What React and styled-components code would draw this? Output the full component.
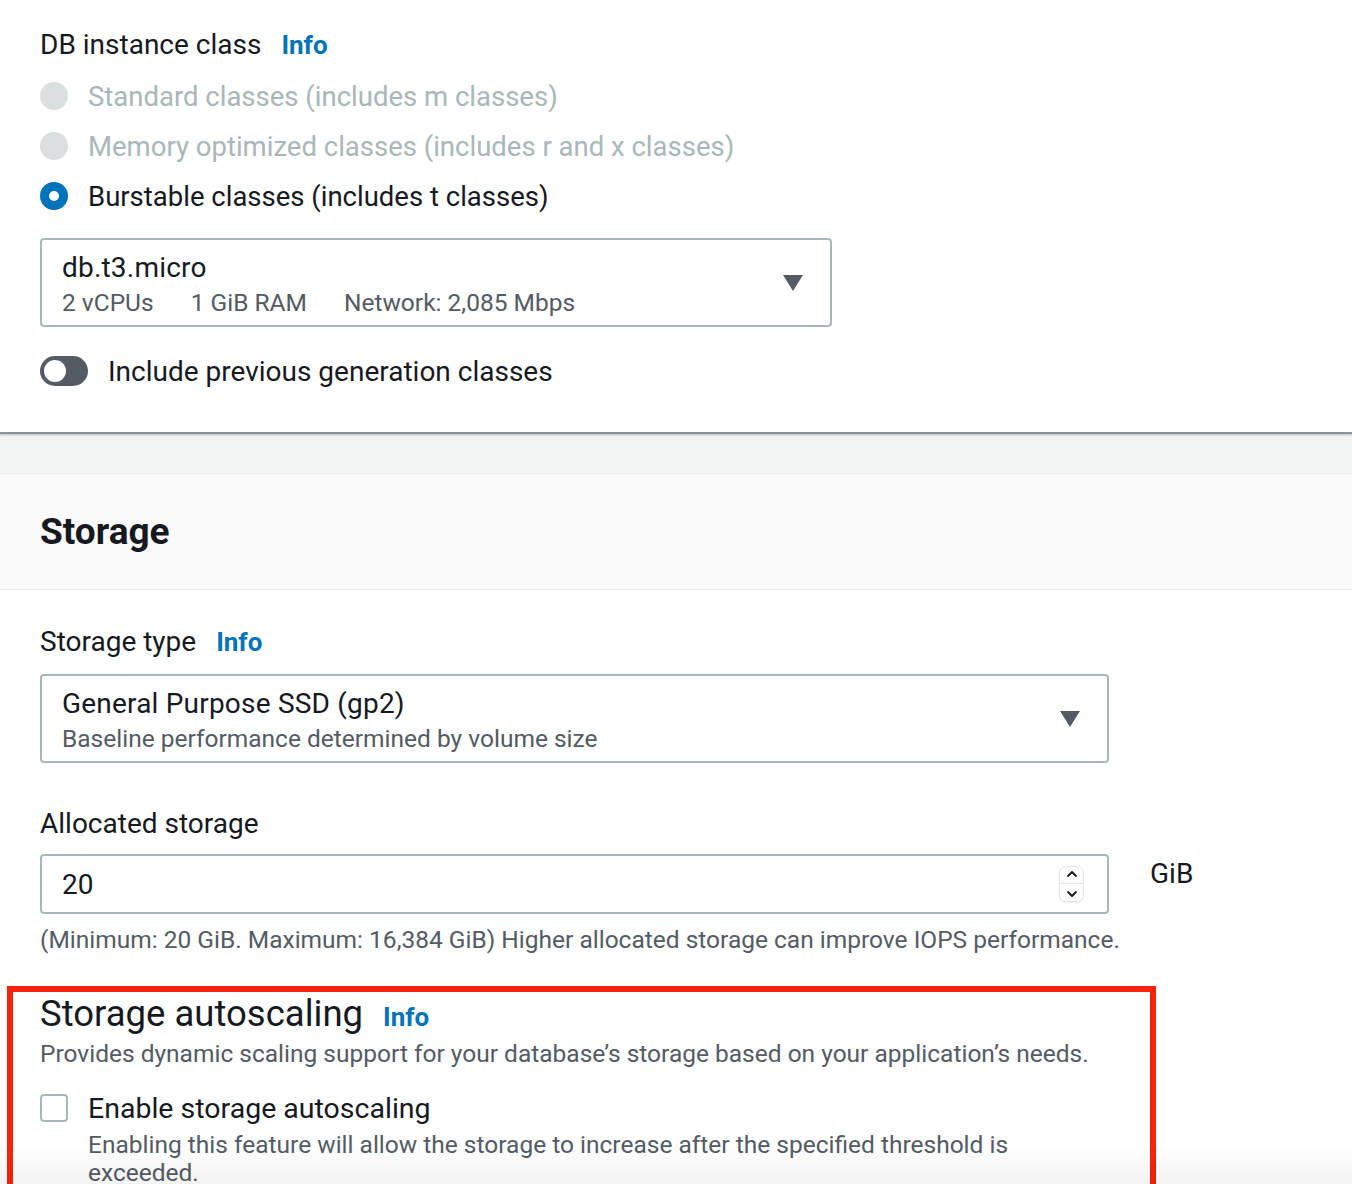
import styled, { createGlobalStyle } from "styled-components";

const GlobalStyle = createGlobalStyle`
  html, body {
    margin: 0;
    padding: 0;
    background: #ffffff;
    font-family: Roboto, "Noto Sans", "Liberation Sans", sans-serif;
    color: #16191f;
  }
  body {
    overflow: hidden;
  }
`;

const Page = styled.div`
  position: relative;
  width: 1352px;
  height: 1184px;
  overflow: hidden;
`;

const TopSection = styled.div`
  padding: 27px 40px 46px 40px;
  border-bottom: 2px solid #879596;
  box-shadow: 0 1px 2px rgba(0, 28, 36, 0.25);
  position: relative;
  z-index: 1;
`;

const Band = styled.div`
  height: 39px;
  background: #f2f3f3;
  border-bottom: 1px solid #eaeded;
`;

const Header = styled.div`
  height: 116px;
  background: #fafafa;
  border-bottom: 1px solid #eaeded;
  display: flex;
  align-items: center;
  padding: 0 40px;
  box-sizing: border-box;
`;

const HeaderTitle = styled.h2`
  margin: 0;
  font-size: 37px;
  font-weight: 700;
`;

const Content = styled.div`
  padding: 34px 40px 0 40px;
`;

const LabelRow = styled.div`
  display: flex;
  align-items: baseline;
  gap: 20px;
  margin-top: ${(p) => p.$mt || 0}px;
  font-size: 28px;
  line-height: 36px;
`;

const Info = styled.span`
  color: #0073bb;
  font-weight: 700;
  font-size: 26px;
`;

const RadioGroup = styled.div`
  margin-top: 8px;
  display: flex;
  flex-direction: column;
`;

const RadioRow = styled.div`
  display: flex;
  align-items: center;
  gap: 20px;
  height: 50px;
  font-size: 27.5px;
  color: ${(p) => (p.$disabled ? "#aab7b8" : "#16191f")};
`;

const Radio = styled.span`
  width: 28px;
  height: 28px;
  border-radius: 50%;
  box-sizing: border-box;
  background: ${(p) => (p.$checked ? "#ffffff" : "#dbdfe0")};
  border: ${(p) => (p.$checked ? "9px solid #0073bb" : "none")};
  flex-shrink: 0;
`;

const Select = styled.div`
  margin-top: ${(p) => p.$mt || 0}px;
  width: ${(p) => p.$width}px;
  height: 89px;
  box-sizing: border-box;
  border: 2px solid #aab7b8;
  border-radius: 4px;
  padding: 11px 27px 0 20px;
  display: flex;
  align-items: center;
  justify-content: space-between;
`;

const SelectText = styled.div`
  display: flex;
  flex-direction: column;
  align-self: flex-start;
`;

const SelectMain = styled.div`
  font-size: 28px;
  line-height: 34px;
  letter-spacing: 0.2px;
`;

const SelectSub = styled.div`
  margin-top: 3px;
  display: flex;
  gap: 37px;
  font-size: 24.5px;
  line-height: 30px;
  color: #545b64;
`;

const Caret = styled.svg`
  width: 20px;
  height: 16px;
  flex-shrink: 0;
  margin-top: -10px;
`;

const ToggleRow = styled.div`
  margin-top: 29px;
  display: flex;
  align-items: center;
  gap: 20px;
  font-size: 28px;
  height: 30px;
`;

const Toggle = styled.span`
  width: 48px;
  height: 30px;
  border-radius: 15px;
  background: #545b64;
  display: flex;
  align-items: center;
  padding: 0 4px;
  box-sizing: border-box;
  &::before {
    content: "";
    width: 22px;
    height: 22px;
    border-radius: 50%;
    background: #ffffff;
  }
`;

const InputLine = styled.div`
  margin-top: 12px;
  display: flex;
  align-items: flex-start;
  gap: 41px;
`;

const Input = styled.div`
  width: 1069px;
  height: 60px;
  box-sizing: border-box;
  border: 2px solid #aab7b8;
  border-radius: 4px;
  display: flex;
  align-items: center;
  justify-content: space-between;
  padding: 0 23px 0 20px;
  font-size: 28px;
`;

const Spinner = styled.div`
  width: 25px;
  height: 36px;
  box-sizing: border-box;
  border: 1px solid #e3e6e6;
  border-radius: 7px;
  display: flex;
  flex-direction: column;
  align-items: center;
  justify-content: space-around;
  background: #ffffff;
  box-shadow: 0 1px 1px rgba(0, 0, 0, 0.06);
`;

const SpinDivider = styled.span`
  width: 100%;
  height: 1px;
  background: #e3e6e6;
`;

const Unit = styled.div`
  font-size: 28px;
  line-height: 36px;
  margin-top: 2px;
`;

const Help = styled.div`
  margin-top: 11px;
  font-size: 24.5px;
  line-height: 30px;
  color: #545b64;
`;

const Autoscale = styled.div`
  position: relative;
  margin-top: 37px;
`;

const AutoTitleRow = styled.div`
  display: flex;
  align-items: baseline;
  gap: 20px;
`;

const AutoTitle = styled.h3`
  margin: 0;
  font-size: 36.5px;
  font-weight: 400;
  line-height: 44px;
`;

const Desc = styled.div`
  margin-top: 3px;
  font-size: 24.5px;
  line-height: 30px;
  color: #545b64;
`;

const CheckRow = styled.div`
  margin-top: 21px;
  display: flex;
  align-items: center;
  gap: 20px;
  height: 36px;
  font-size: 28.5px;
`;

const Checkbox = styled.span`
  width: 28px;
  height: 28px;
  box-sizing: border-box;
  border: 2px solid #aab7b8;
  border-radius: 4px;
  flex-shrink: 0;
`;

const CheckSub = styled.div`
  margin-top: 5px;
  margin-left: 48px;
  width: 1000px;
  font-size: 24.5px;
  line-height: 28px;
  color: #545b64;
`;

const Annotation = styled.div`
  position: absolute;
  left: -33px;
  top: -6px;
  width: 1149px;
  height: 232px;
  box-sizing: border-box;
  border: 6px solid #f7230c;
  pointer-events: none;
`;

const FooterShade = styled.div`
  position: absolute;
  left: 0;
  right: 0;
  bottom: 0;
  height: 40px;
  background: linear-gradient(rgba(0, 0, 0, 0), rgba(0, 0, 0, 0.05));
  pointer-events: none;
`;

function CaretIcon() {
  return (
    <Caret viewBox="0 0 20 16">
      <path d="M0 0 H20 L10 16 Z" fill="#545b64" />
    </Caret>
  );
}

function Chevron({ up }) {
  return (
    <svg width="12" height="8" viewBox="0 0 12 8">
      <path
        d={up ? "M2 6 L6 2 L10 6" : "M2 2 L6 6 L10 2"}
        fill="none"
        stroke="#16191f"
        strokeWidth="1.8"
        strokeLinecap="round"
        strokeLinejoin="round"
      />
    </svg>
  );
}

export default function App() {
  return (
    <Page>
      <GlobalStyle />
      <TopSection>
        <LabelRow>
          DB instance class <Info>Info</Info>
        </LabelRow>
        <RadioGroup>
          <RadioRow $disabled>
            <Radio />
            Standard classes (includes m classes)
          </RadioRow>
          <RadioRow $disabled>
            <Radio />
            Memory optimized classes (includes r and x classes)
          </RadioRow>
          <RadioRow>
            <Radio $checked />
            Burstable classes (includes t classes)
          </RadioRow>
        </RadioGroup>
        <Select $width={792} $mt={17}>
          <SelectText>
            <SelectMain>db.t3.micro</SelectMain>
            <SelectSub>
              <span>2 vCPUs</span>
              <span>1 GiB RAM</span>
              <span>Network: 2,085 Mbps</span>
            </SelectSub>
          </SelectText>
          <CaretIcon />
        </Select>
        <ToggleRow>
          <Toggle />
          Include previous generation classes
        </ToggleRow>
      </TopSection>
      <Band />
      <Header>
        <HeaderTitle>Storage</HeaderTitle>
      </Header>
      <Content>
        <LabelRow>
          Storage type <Info>Info</Info>
        </LabelRow>
        <Select $width={1069} $mt={14}>
          <SelectText>
            <SelectMain>General Purpose SSD (gp2)</SelectMain>
            <SelectSub>Baseline performance determined by volume size</SelectSub>
          </SelectText>
          <CaretIcon />
        </Select>
        <LabelRow $mt={43}>Allocated storage</LabelRow>
        <InputLine>
          <Input>
            20
            <Spinner>
              <Chevron up />
              <SpinDivider />
              <Chevron />
            </Spinner>
          </Input>
          <Unit>GiB</Unit>
        </InputLine>
        <Help>
          (Minimum: 20 GiB. Maximum: 16,384 GiB) Higher allocated storage can
          improve IOPS performance.
        </Help>
        <Autoscale>
          <AutoTitleRow>
            <AutoTitle>Storage autoscaling</AutoTitle>
            <Info>Info</Info>
          </AutoTitleRow>
          <Desc>
            Provides dynamic scaling support for your database’s storage based
            on your application’s needs.
          </Desc>
          <CheckRow>
            <Checkbox />
            Enable storage autoscaling
          </CheckRow>
          <CheckSub>
            Enabling this feature will allow the storage to increase after the
            specified threshold is exceeded.
          </CheckSub>
          <Annotation />
        </Autoscale>
      </Content>
      <FooterShade />
    </Page>
  );
}
